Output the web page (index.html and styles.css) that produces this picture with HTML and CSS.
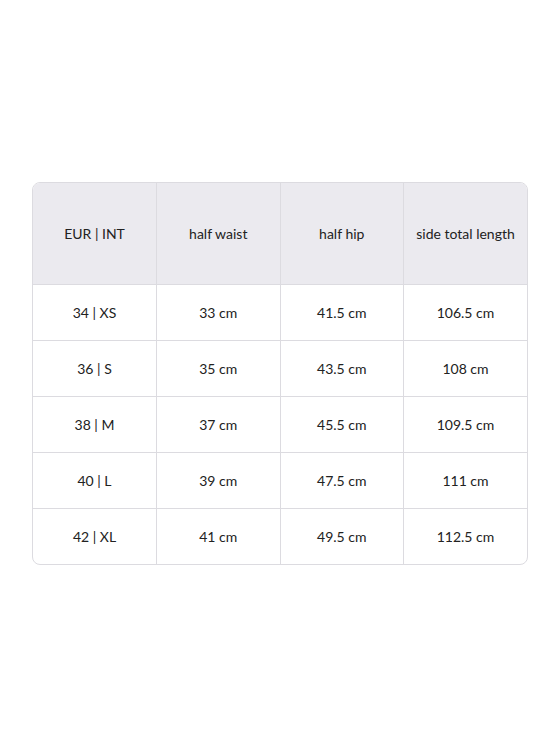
FILE: index.html
```html
<!DOCTYPE html>
<html>
<head>
<meta charset="utf-8">
<link rel="stylesheet" href="styles.css">
</head>
<body>
<main class="page">
  <div class="size-table">
    <table>
      <thead>
        <tr>
          <th>EUR | INT</th>
          <th>half waist</th>
          <th>half hip</th>
          <th>side total length</th>
        </tr>
      </thead>
      <tbody>
        <tr><td>34 | XS</td><td>33 cm</td><td>41.5 cm</td><td>106.5 cm</td></tr>
        <tr><td>36 | S</td><td>35 cm</td><td>43.5 cm</td><td>108 cm</td></tr>
        <tr><td>38 | M</td><td>37 cm</td><td>45.5 cm</td><td>109.5 cm</td></tr>
        <tr><td>40 | L</td><td>39 cm</td><td>47.5 cm</td><td>111 cm</td></tr>
        <tr><td>42 | XL</td><td>41 cm</td><td>49.5 cm</td><td>112.5 cm</td></tr>
      </tbody>
    </table>
  </div>
</main>
</body>
</html>
```

FILE: styles.css
```css
html, body {
  margin: 0;
  padding: 0;
  background: #ffffff;
}

.page {
  height: 746px;
  display: flex;
  align-items: center;
  justify-content: center;
  font-family: Lato, "Open Sans", sans-serif;
  color: #222222;
}

.size-table {
  width: 496px;
  box-sizing: border-box;
  border: 1px solid #dcdbe0;
  border-radius: 8px;
  overflow: hidden;
}

table {
  width: 100%;
  border-collapse: collapse;
  table-layout: fixed;
}

th, td {
  text-align: center;
  vertical-align: middle;
  font-size: 14px;
  font-weight: 400;
  border-left: 1px solid #dcdbe0;
  border-top: 1px solid #dcdbe0;
  padding: 0;
}

th:first-child, td:first-child {
  border-left: none;
}

thead th {
  border-top: none;
  height: 101px;
  background: #ebeaef;
}

tbody td {
  height: 55px;
}
```
